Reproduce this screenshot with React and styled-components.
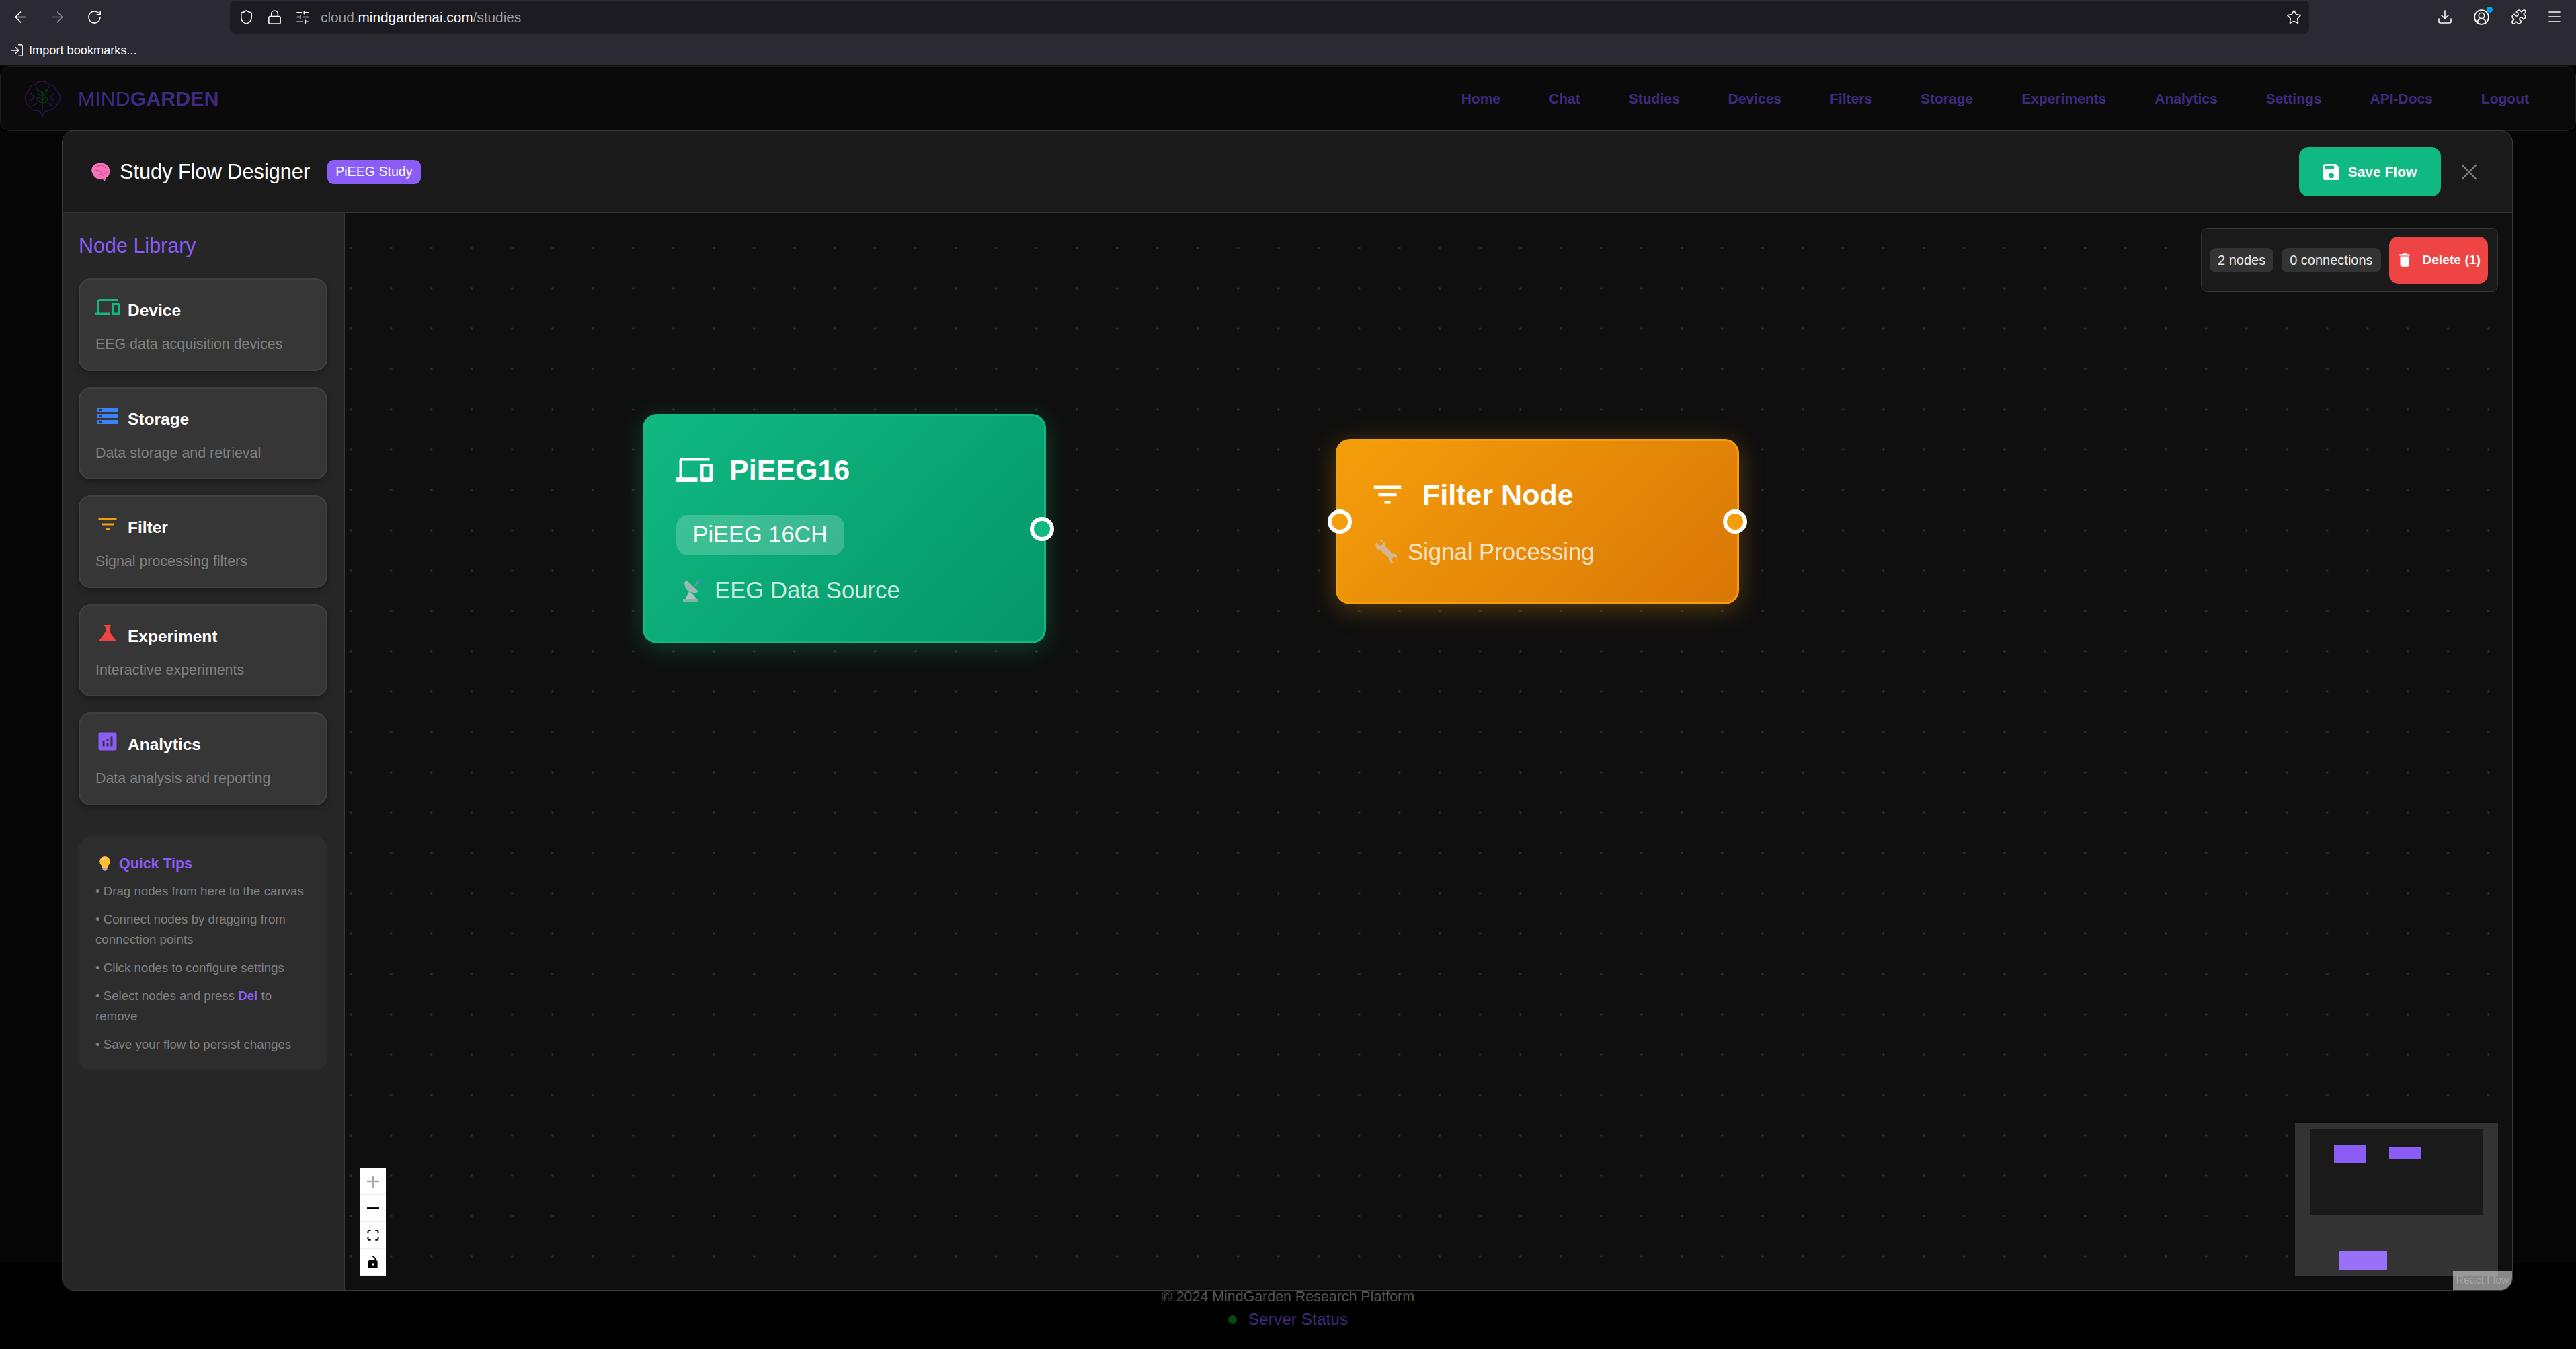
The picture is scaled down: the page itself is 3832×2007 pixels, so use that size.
import React from "react";
import styled, { createGlobalStyle } from "styled-components";
import {
  ArrowLeft,
  ArrowRight,
  RotateCw,
  Shield,
  Lock,
  SlidersHorizontal,
  Star,
  Download,
  CircleUserRound,
  Puzzle,
  Menu,
  LogIn,
  X,
} from "lucide-react";
import {
  MdDevices,
  MdStorage,
  MdFilterList,
  MdScience,
  MdAnalytics,
  MdSave,
  MdDelete,
} from "react-icons/md";

const GlobalStyle = createGlobalStyle`
  html, body {
    margin: 0;
    padding: 0;
    height: 2007px;
    overflow: hidden;
    background: #000;
    font-family: "Liberation Sans", Arial, sans-serif;
  }
  * { box-sizing: border-box; }
`;

/* browser chrome */
const Page = styled.div`
  width: 3832px;
  height: 2007px;
  display: flex;
  flex-direction: column;
  position: relative;
`;

const Chrome = styled.header`
  height: 98px;
  background: #2b2a33;
  border-bottom: 1px solid #0c0c0d;
  display: flex;
  flex-direction: column;
  color: #fbfbfe;
`;

const ToolRow = styled.div`
  height: 50px;
  display: flex;
  align-items: flex-start;
`;

const NavCluster = styled.div`
  width: 342px;
  padding-left: 3px;
  display: flex;
`;

const RightCluster = styled.div`
  flex: 1;
  padding-right: 6px;
  display: flex;
  justify-content: flex-end;
`;

const IconSlot = styled.div`
  width: ${(p) => p.$w || 55}px;
  height: 50px;
  display: flex;
  align-items: center;
  justify-content: center;
  position: relative;
  color: ${(p) => (p.$dim ? "#85848a" : "#fbfbfe")};
`;

const NotifyDot = styled.span`
  position: absolute;
  top: 10px;
  right: 11px;
  width: 9px;
  height: 9px;
  border-radius: 50%;
  background: #00a2e8;
`;

const UrlBar = styled.div`
  width: 3093px;
  height: 49px;
  margin-top: 1px;
  background: #1c1b22;
  border-radius: 8px;
  display: flex;
  align-items: center;
  padding: 0 2px 0 3px;
`;

const UrlText = styled.div`
  flex: 1;
  margin-left: 6px;
  font-size: 20.8px;
  color: #9d9ca2;
`;

const UrlHost = styled.span`
  color: #fbfbfe;
`;

const BookmarkRow = styled.div`
  height: 47px;
  padding: 3px 0 0 14px;
  display: flex;
  align-items: center;
  gap: 7px;
  font-size: 18.2px;
`;

/* site nav behind the modal */
const SiteNav = styled.nav`
  height: 97px;
  background: #0a0a0a;
  border: 1px solid #1d1d1d;
  border-radius: 14px;
  padding: 0 69px 0 34px;
  display: flex;
  align-items: center;
`;

const Brand = styled.div`
  display: flex;
  align-items: center;
  gap: 25px;
  font-size: 30.4px;
  color: #3e2a7f;
  margin-right: auto;
`;

const BrandBold = styled.b`
  font-weight: 700;
`;

const NavLinks = styled.div`
  display: flex;
  gap: 72px;
`;

const NavLink = styled.a`
  font-size: 21px;
  font-weight: 700;
  color: #3e2a7f;
`;

const Backdrop = styled.main`
  flex: 1;
  background: #060606;
`;

const Footer = styled.footer`
  height: 128px;
  padding-top: 36px;
  display: flex;
  flex-direction: column;
  align-items: center;
  gap: 6px;
  color: #555;
  font-size: 21.4px;
`;

const FooterLine = styled.div`
  height: 28px;
  line-height: 28px;
`;

const ServerStatus = styled.div`
  height: 28px;
  line-height: 28px;
  display: flex;
  align-items: center;
  gap: 17px;
  font-size: 24.5px;
  color: #3e2a7f;
`;

const StatusDot = styled.span`
  width: 13px;
  height: 13px;
  border-radius: 50%;
  background: #0a470c;
`;

/* modal */
const Modal = styled.section`
  position: absolute;
  top: 194px;
  left: 92px;
  width: 3646px;
  height: 1726px;
  background: #1a1a1a;
  border: 1px solid #3a3a3a;
  border-radius: 18px;
  overflow: hidden;
  display: flex;
  flex-direction: column;
`;

const ModalHeader = styled.div`
  height: 122px;
  flex: none;
  padding: 0 43px 0 41px;
  border-bottom: 1px solid #333;
  display: flex;
  align-items: center;
`;

const Title = styled.h1`
  margin: 0 0 0 14px;
  font-size: 30.7px;
  font-weight: 400;
  color: #fff;
`;

const StudyBadge = styled.span`
  margin-left: 26px;
  height: 36px;
  padding: 0 12px;
  line-height: 35px;
  border-radius: 9px;
  background: #8b5cf6;
  color: #fff;
  font-size: 19.6px;
`;

const SaveButton = styled.button`
  margin-left: auto;
  width: 211px;
  height: 73px;
  padding: 0 4px 0 0;
  border: 0;
  border-radius: 14px;
  background: #10b981;
  color: #fff;
  font: 700 21px "Liberation Sans", Arial, sans-serif;
  display: flex;
  align-items: center;
  justify-content: center;
  gap: 9px;
`;

const CloseButton = styled.div`
  width: 42px;
  margin-left: 21px;
  display: flex;
  justify-content: center;
  color: #858585;
`;

const Body = styled.div`
  flex: 1;
  min-height: 0;
  display: flex;
`;

const Sidebar = styled.aside`
  width: 420px;
  flex: none;
  background: #262626;
  border-right: 1px solid #3a3a3a;
  padding: 30px 25px 0 24px;
`;

const LibraryTitle = styled.h2`
  margin: 0 0 31px;
  font-size: 30.5px;
  line-height: 36px;
  font-weight: 400;
  color: #8b5cf6;
`;

const CardList = styled.div`
  display: flex;
  flex-direction: column;
  gap: 24px;
`;

const Card = styled.div`
  height: 137.5px;
  padding: 23px;
  background: #363636;
  border: 2px solid #404040;
  border-radius: 18px;
  box-shadow: 0 4px 8px rgba(0, 0, 0, 0.3);
`;

const CardHead = styled.div`
  display: flex;
  gap: 12px;
  margin-bottom: 20px;
  color: ${(p) => p.$color};
`;

const CardName = styled.div`
  margin-top: 7px;
  font-size: 24.5px;
  line-height: 32px;
  font-weight: 700;
  color: #fff;
`;

const CardDesc = styled.div`
  font-size: 21.4px;
  line-height: 28px;
  color: #808080;
`;

const Tips = styled.div`
  margin-top: 47.5px;
  height: 347px;
  padding: 25px 25px 0;
  background: #2d2d2d;
  border-radius: 18px;
`;

const TipsTitle = styled.div`
  height: 30px;
  margin-bottom: 11px;
  display: flex;
  align-items: center;
  gap: 12px;
  padding-left: 5px;
  font-size: 21.4px;
  font-weight: 700;
  color: #8b5cf6;
`;

const Tip = styled.p`
  margin: 0 0 12px;
  font-size: 18.7px;
  line-height: 30px;
  color: #808080;
`;

const TipKey = styled.b`
  color: #8b5cf6;
`;

/* canvas */
const Canvas = styled.div`
  flex: 1;
  position: relative;
  background-color: #0f0f0f;
  background-image: radial-gradient(circle, #2b2b2b 1.5px, transparent 2.1px);
  background-size: 60px 60px;
  background-position: -21.3px 22px;
`;

const FlowNode = styled.div`
  position: absolute;
  top: ${(p) => p.$top}px;
  left: ${(p) => p.$left}px;
  width: 600px;
  height: ${(p) => p.$height}px;
  padding: ${(p) => p.$pad}px 47px 0;
  border: 3px solid ${(p) => p.$from};
  border-radius: 21px;
  background: linear-gradient(135deg, ${(p) => p.$from}, ${(p) => p.$to});
  box-shadow: 0 7px 38px ${(p) => p.$glow};
  color: #fff;
`;

const NodeHead = styled.div`
  height: 54px;
  display: flex;
  align-items: center;
  gap: 25px;
`;

const NodeTitle = styled.div`
  font-size: 43px;
  font-weight: 700;
`;

const NodeTag = styled.div`
  display: inline-block;
  margin-top: 40px;
  height: 60px;
  padding: 0 24.5px;
  line-height: 58px;
  border-radius: 18px;
  background: rgba(255, 255, 255, 0.2);
  font-size: 34.4px;
`;

const NodeSub = styled.div`
  margin-top: ${(p) => p.$gap}px;
  height: 44px;
  padding-left: 7px;
  display: flex;
  align-items: center;
  gap: 16px;
  font-size: 34.7px;
  color: rgba(255, 255, 255, 0.8);
`;

const Handle = styled.span`
  position: absolute;
  top: 50%;
  ${(p) => p.$side}: -15px;
  width: 36px;
  height: 36px;
  margin-top: -18px;
  border-radius: 50%;
  border: 6px solid #fff;
  background: ${(p) => p.$color};
`;

const StatsPanel = styled.div`
  position: absolute;
  top: 22px;
  right: 21px;
  width: 442px;
  height: 95px;
  padding: 0 12px;
  background: #1a1a1a;
  border: 1px solid #333;
  border-radius: 9px;
  display: flex;
  align-items: center;
  gap: 12px;
`;

const StatChip = styled.span`
  height: 36px;
  padding: 0 12px;
  line-height: 36px;
  border-radius: 9px;
  background: #333;
  color: #e8e8e8;
  font-size: 20px;
  white-space: nowrap;
`;

const DeleteButton = styled.button`
  width: 147px;
  height: 70px;
  padding: 0;
  border: 0;
  border-radius: 14px;
  background: #ef4444;
  color: #fff;
  font: 700 19.25px "Liberation Sans", Arial, sans-serif;
  display: flex;
  align-items: center;
  justify-content: center;
  gap: 13px;
  white-space: nowrap;
`;

const Controls = styled.div`
  position: absolute;
  left: 22px;
  bottom: 21px;
  width: 39px;
  display: flex;
  flex-direction: column;
  background: #fff;
`;

const ControlButton = styled.div`
  height: 40px;
  border-bottom: 1px solid #eee;
  display: flex;
  align-items: center;
  justify-content: center;
`;

const MiniMap = styled.svg`
  position: absolute;
  right: 21px;
  bottom: 21px;
`;

const Attribution = styled.div`
  position: absolute;
  right: 0;
  bottom: 0;
  width: 88px;
  height: 28px;
  background: rgba(255, 255, 255, 0.5);
  color: #a6a6a6;
  font-size: 15.75px;
  line-height: 28px;
  text-align: center;
  white-space: nowrap;
`;

const links = ["Home", "Chat", "Studies", "Devices", "Filters", "Storage", "Experiments", "Analytics", "Settings", "API-Docs", "Logout"];

const library = [
  { name: "Device", desc: "EEG data acquisition devices", color: "#10b981", Icon: MdDevices },
  { name: "Storage", desc: "Data storage and retrieval", color: "#3b82f6", Icon: MdStorage },
  { name: "Filter", desc: "Signal processing filters", color: "#f59e0b", Icon: MdFilterList },
  { name: "Experiment", desc: "Interactive experiments", color: "#ef4444", Icon: MdScience },
  { name: "Analytics", desc: "Data analysis and reporting", color: "#8b5cf6", Icon: MdAnalytics },
];

function BrandLogo() {
  return (
    <svg width="56" height="56" viewBox="0 0 56 56" fill="none" strokeWidth="1.6" opacity="0.75">
      <defs>
        <linearGradient id="logoStroke" x1="0" y1="0" x2="1" y2="1">
          <stop offset="0" stopColor="#4a0f4f" />
          <stop offset="1" stopColor="#1c1670" />
        </linearGradient>
      </defs>
      <path
        d="M28 2c-6 0-9 2-11 5-5 0-9 4-9 9-4 3-6 8-5 13 0 5 3 9 7 11 2 4 6 6 10 5 3 1 5 2 6 4l2 6 2-6c2-3 6-3 9-5 5 0 9-3 10-7 4-3 6-8 5-13-1-4-3-7-6-9-1-5-5-8-10-8-3-3-6-5-10-5z"
        stroke="url(#logoStroke)"
      />
      <path d="M10 20l6 5-5 6M46 20l-6 5 5 6M18 9l3 7M38 9l-3 7M14 38l6-4M42 38l-6-4" stroke="url(#logoStroke)" />
      <path
        d="M28 44V16M28 24c-5-1-7-4-7-9 5 1 7 4 7 9zM28 24c1-6 3-8 7-10 0 6-2 9-7 10zM28 34c-5-1-8-4-8-8 5 0 8 3 8 8zM28 34c0-5 3-8 8-8 0 5-3 8-8 8z"
        stroke="#0d3a1c"
      />
    </svg>
  );
}

function BrainEmoji() {
  return (
    <svg width="30" height="28" viewBox="0 0 30 28">
      <path d="M4 17C0 11 3 3 11 1c7-2 16 1 18 9 1 6-1 11-6 13l-1 5-3-3c-8 1-13-3-15-8z" fill="#f472b6" />
      <path d="M9 6c5-3 11-2 14 2M6 13c4-3 8-2 10 1 3 3 7 3 10 0M12 19c3-2 6-2 8 1" fill="none" stroke="#db4f9b" strokeWidth="1.5" />
    </svg>
  );
}

function BulbEmoji() {
  return (
    <svg width="18" height="22" viewBox="0 0 18 22">
      <path d="M9 0a8 8 0 0 0-5 14c1 1 1 2 1 3h8c0-1 0-2 1-3A8 8 0 0 0 9 0z" fill="#fbc02d" />
      <path d="M6 5a4 4 0 0 1 3-2" fill="none" stroke="#fff3c4" strokeWidth="1.5" />
      <rect x="5.5" y="17" width="7" height="3.5" rx="1" fill="#b0a6b8" />
      <rect x="7" y="20.5" width="4" height="1.5" fill="#8a7f96" />
    </svg>
  );
}

function SatelliteEmoji() {
  return (
    <svg width="34" height="36" viewBox="0 0 34 36" opacity="0.8">
      <path d="M5 8c1 9 7 15 17 14 2 0 3-1 4-2L9 4C7 4 5 6 5 8z" fill="#bdbdbd" />
      <path d="M19 13l6-6" stroke="#8f8f8f" strokeWidth="2" />
      <circle cx="25" cy="7" r="2" fill="#8f8f8f" />
      <path d="M25 1c4 0 8 4 8 8M25 4c3 0 5 2 5 5" fill="none" stroke="#2a8fd8" strokeWidth="1.6" />
      <path d="M12 20l-6 12h18l-6-8z" fill="#c9ced3" />
      <rect x="3" y="31" width="22" height="4" fill="#aab4bb" />
    </svg>
  );
}

function WrenchEmoji() {
  return (
    <svg width="34" height="34" viewBox="0 0 34 34" opacity="0.75">
      <path
        d="M3 3l5 5 4-1 1-4-5-3c5-1 9 3 8 8l12 12c5-1 8 3 8 8l-5-3-4 1-1 4 4 4c-5 1-9-3-8-8L9 14C4 15 1 9 3 3z"
        fill="#c9c2c0"
      />
    </svg>
  );
}

function App() {
  return (
    <Page>
      <GlobalStyle />
      <Chrome>
        <ToolRow>
          <NavCluster>
            <IconSlot><ArrowLeft size={25} strokeWidth={1.6} /></IconSlot>
            <IconSlot $dim><ArrowRight size={25} strokeWidth={1.6} /></IconSlot>
            <IconSlot><RotateCw size={23} strokeWidth={1.6} /></IconSlot>
          </NavCluster>
          <UrlBar>
            <IconSlot $w={42}><Shield size={23} strokeWidth={1.6} /></IconSlot>
            <IconSlot $w={42}><Lock size={23} strokeWidth={1.6} /></IconSlot>
            <IconSlot $w={42}><SlidersHorizontal size={23} strokeWidth={1.6} /></IconSlot>
            <UrlText>
              cloud.<UrlHost>mindgardenai.com</UrlHost>/studies
            </UrlText>
            <IconSlot $w={42}><Star size={23} strokeWidth={1.6} /></IconSlot>
          </UrlBar>
          <RightCluster>
            <IconSlot><Download size={24} strokeWidth={1.6} /></IconSlot>
            <IconSlot>
              <CircleUserRound size={25} strokeWidth={1.6} />
              <NotifyDot />
            </IconSlot>
            <IconSlot><Puzzle size={24} strokeWidth={1.6} /></IconSlot>
            <IconSlot $w={52}><Menu size={24} strokeWidth={1.6} /></IconSlot>
          </RightCluster>
        </ToolRow>
        <BookmarkRow>
          <LogIn size={22} strokeWidth={1.6} />
          Import bookmarks...
        </BookmarkRow>
      </Chrome>

      <SiteNav>
        <Brand>
          <BrandLogo />
          <span>
            MIND<BrandBold>GARDEN</BrandBold>
          </span>
        </Brand>
        <NavLinks>
          {links.map((l) => (
            <NavLink key={l}>{l}</NavLink>
          ))}
        </NavLinks>
      </SiteNav>
      <Backdrop />
      <Footer>
        <FooterLine>© 2024 MindGarden Research Platform</FooterLine>
        <ServerStatus>
          <StatusDot />
          Server Status
        </ServerStatus>
      </Footer>

      <Modal>
        <ModalHeader>
          <BrainEmoji />
          <Title>Study Flow Designer</Title>
          <StudyBadge>PiEEG Study</StudyBadge>
          <SaveButton>
            <MdSave size={32} />
            Save Flow
          </SaveButton>
          <CloseButton>
            <X size={40} strokeWidth={1.3} />
          </CloseButton>
        </ModalHeader>
        <Body>
          <Sidebar>
            <LibraryTitle>Node Library</LibraryTitle>
            <CardList>
              {library.map(({ name, desc, color, Icon }) => (
                <Card key={name}>
                  <CardHead $color={color}>
                    <Icon size={36} />
                    <CardName>{name}</CardName>
                  </CardHead>
                  <CardDesc>{desc}</CardDesc>
                </Card>
              ))}
            </CardList>
            <Tips>
              <TipsTitle>
                <BulbEmoji />
                Quick Tips
              </TipsTitle>
              <Tip>• Drag nodes from here to the canvas</Tip>
              <Tip>• Connect nodes by dragging from connection points</Tip>
              <Tip>• Click nodes to configure settings</Tip>
              <Tip>
                • Select nodes and press <TipKey>Del</TipKey> to remove
              </Tip>
              <Tip>• Save your flow to persist changes</Tip>
            </Tips>
          </Sidebar>

          <Canvas>
            <FlowNode $top={299} $left={443} $height={341} $pad={53} $from="#10b981" $to="#059669" $glow="rgba(16, 185, 129, 0.28)">
              <NodeHead>
                <MdDevices size={54} />
                <NodeTitle>PiEEG16</NodeTitle>
              </NodeHead>
              <NodeTag>PiEEG 16CH</NodeTag>
              <NodeSub $gap={30}>
                <SatelliteEmoji />
                EEG Data Source
              </NodeSub>
              <Handle $side="right" $color="#10b981" />
            </FlowNode>

            <FlowNode $top={336} $left={1474} $height={246} $pad={53} $from="#f59e0b" $to="#d97706" $glow="rgba(245, 158, 11, 0.3)">
              <NodeHead>
                <MdFilterList size={54} />
                <NodeTitle>Filter Node</NodeTitle>
              </NodeHead>
              <NodeSub $gap={36}>
                <WrenchEmoji />
                Signal Processing
              </NodeSub>
              <Handle $side="left" $color="#f59e0b" />
              <Handle $side="right" $color="#f59e0b" />
            </FlowNode>

            <StatsPanel>
              <StatChip>2 nodes</StatChip>
              <StatChip>0 connections</StatChip>
              <DeleteButton>
                <MdDelete size={26} />
                Delete (1)
              </DeleteButton>
            </StatsPanel>

            <Controls>
              <ControlButton>
                <svg width="18" height="18" viewBox="0 0 32 32" fill="#aaa">
                  <path d="M32 18.133H18.133V32h-4.266V18.133H0v-4.266h13.867V0h4.266v13.867H32z" />
                </svg>
              </ControlButton>
              <ControlButton>
                <svg width="18" height="3" viewBox="0 0 32 5">
                  <path d="M0 0h32v4.2H0z" />
                </svg>
              </ControlButton>
              <ControlButton>
                <svg width="18" height="16" viewBox="0 0 32 30">
                  <path d="M3.692 4.63c0-.53.4-.938.939-.938h5.215V0H4.708C2.13 0 0 2.054 0 4.63v5.216h3.692V4.631zM27.354 0h-5.2v3.692h5.17c.53 0 .984.4.984.939v5.215H32V4.631A4.624 4.624 0 0027.354 0zm.954 24.83c0 .532-.4.94-.939.94h-5.215v3.768h5.215c2.577 0 4.631-2.13 4.631-4.707v-5.139h-3.692v5.139zm-23.677.94c-.531 0-.939-.4-.939-.94v-5.138H0v5.139c0 2.577 2.13 4.707 4.708 4.707h5.138V25.77H4.631z" />
                </svg>
              </ControlButton>
              <ControlButton>
                <svg width="14" height="18" viewBox="0 0 25 32">
                  <path d="M21.333 10.667H19.81V7.619C19.81 3.429 16.38 0 12.19 0c-4.114 1.828-1.37 2.133.305 2.438 1.676.305 4.42 2.59 4.42 5.181v3.048H3.047A3.056 3.056 0 000 13.714v15.238A3.056 3.056 0 003.048 32h18.285a3.056 3.056 0 003.048-3.048V13.714a3.056 3.056 0 00-3.048-3.047zM12.19 24.533a3.056 3.056 0 01-3.047-3.047 3.056 3.056 0 013.047-3.048 3.056 3.056 0 013.048 3.048 3.056 3.056 0 01-3.048 3.047z" />
                </svg>
              </ControlButton>
            </Controls>

            <MiniMap width="302" height="227" viewBox="0 0 302 227">
              <rect width="302" height="227" fill="#333" />
              <rect x="23" y="8" width="256" height="128" fill="#1a1a1a" />
              <rect x="58" y="32" width="48" height="27" rx="1" fill="#8b5cf6" />
              <rect x="140" y="35" width="48" height="19" rx="1" fill="#8b5cf6" />
              <rect x="65" y="190" width="72" height="29" rx="1" fill="#9a70f8" />
            </MiniMap>
            <Attribution>React Flow</Attribution>
          </Canvas>
        </Body>
      </Modal>
    </Page>
  );
}

export default App;
